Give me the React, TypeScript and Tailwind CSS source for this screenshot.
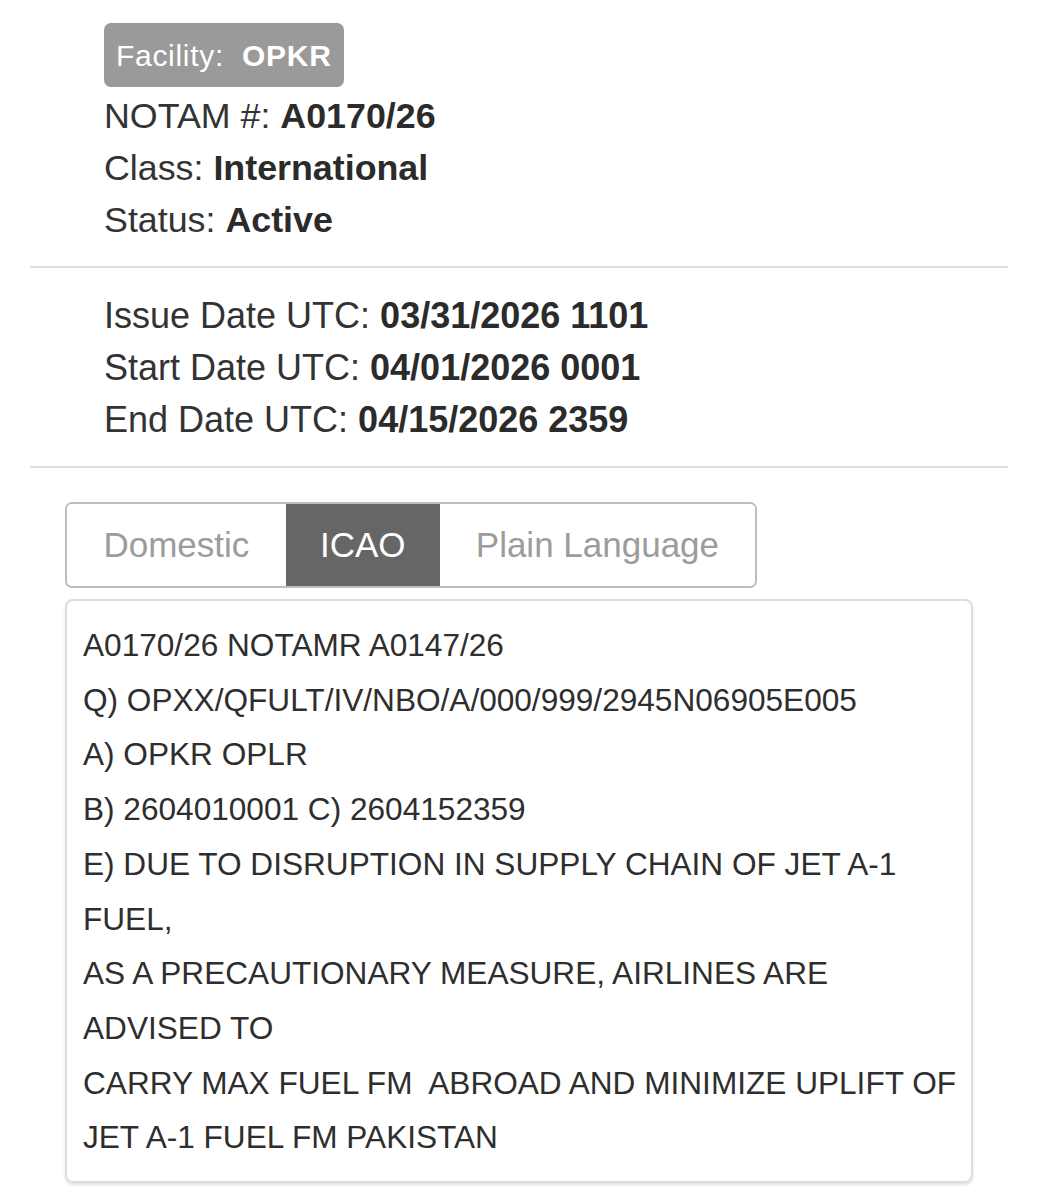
const icaoLines = [
  'A0170/26 NOTAMR A0147/26',
  'Q) OPXX/QFULT/IV/NBO/A/000/999/2945N06905E005',
  'A) OPKR OPLR',
  'B) 2604010001 C) 2604152359',
  'E) DUE TO DISRUPTION IN SUPPLY CHAIN OF JET A-1',
  'FUEL,',
  'AS A PRECAUTIONARY MEASURE, AIRLINES ARE',
  'ADVISED TO',
  'CARRY MAX FUEL FM  ABROAD AND MINIMIZE UPLIFT OF',
  'JET A-1 FUEL FM PAKISTAN',
]

function Field({ label, value }: { label: string; value: string }) {
  return (
    <div className="leading-[52px] whitespace-nowrap">
      {label} <span className="font-bold text-[#2b2b2b]">{value}</span>
    </div>
  )
}

export default function App() {
  const tabs = [
    { name: 'Domestic', w: 'w-[220px]', active: false },
    { name: 'ICAO', w: 'w-[155px]', active: true },
    { name: 'Plain Language', w: 'w-[317px]', active: false },
  ]

  return (
    <div className="min-h-[1200px] bg-white text-[#333] font-['Liberation_Sans',Arial,sans-serif]">
      <div className="pl-[104px] pt-[23px] text-[35.8px]">
        <div className="inline-flex h-[64px] items-center rounded-[7px] bg-[#9a9a9a] px-[12px] text-[30px] tracking-[0.7px] text-white whitespace-pre">
          Facility:  <span className="font-bold">OPKR</span>
        </div>
        <div className="mt-[3px]">
          <Field label="NOTAM #:" value="A0170/26" />
          <Field label="Class:" value="International" />
          <Field label="Status:" value="Active" />
        </div>
      </div>

      <div className="ml-[30px] mr-[38px] mt-[20px] border-t-2 border-[#dedede]" />

      <div className="pl-[104px] pt-[22px] text-[36px]">
        <Field label="Issue Date UTC:" value="03/31/2026 1101" />
        <Field label="Start Date UTC:" value="04/01/2026 0001" />
        <Field label="End Date UTC:" value="04/15/2026 2359" />
      </div>

      <div className="ml-[30px] mr-[38px] mt-[20px] border-t-2 border-[#dedede]" />

      {/* Tabs */}
      <div className="ml-[65px] mt-[34px] flex h-[86px] w-[692px] overflow-hidden rounded-[7px] border-2 border-[#bdbdbd]">
        {tabs.map((t) => (
          <div
            key={t.name}
            className={`${t.w} flex items-center justify-center text-[35px] ${t.active ? 'bg-[#666] text-white' : 'bg-white text-[#9c9c9c]'}`}
          >
            {t.name}
          </div>
        ))}
      </div>

      {/* ICAO text */}
      <div className="ml-[65px] mt-[11px] w-[908px] rounded-[8px] border-2 border-[#dddddd] px-[16px] pt-[17px] pb-[16px] shadow-[0_2px_3px_rgba(0,0,0,0.12)]">
        {icaoLines.map((l, i) => (
          <div key={i} className="whitespace-pre text-[31.6px] leading-[54.7px] text-[#2e2e2e]">
            {l}
          </div>
        ))}
      </div>
    </div>
  )
}
